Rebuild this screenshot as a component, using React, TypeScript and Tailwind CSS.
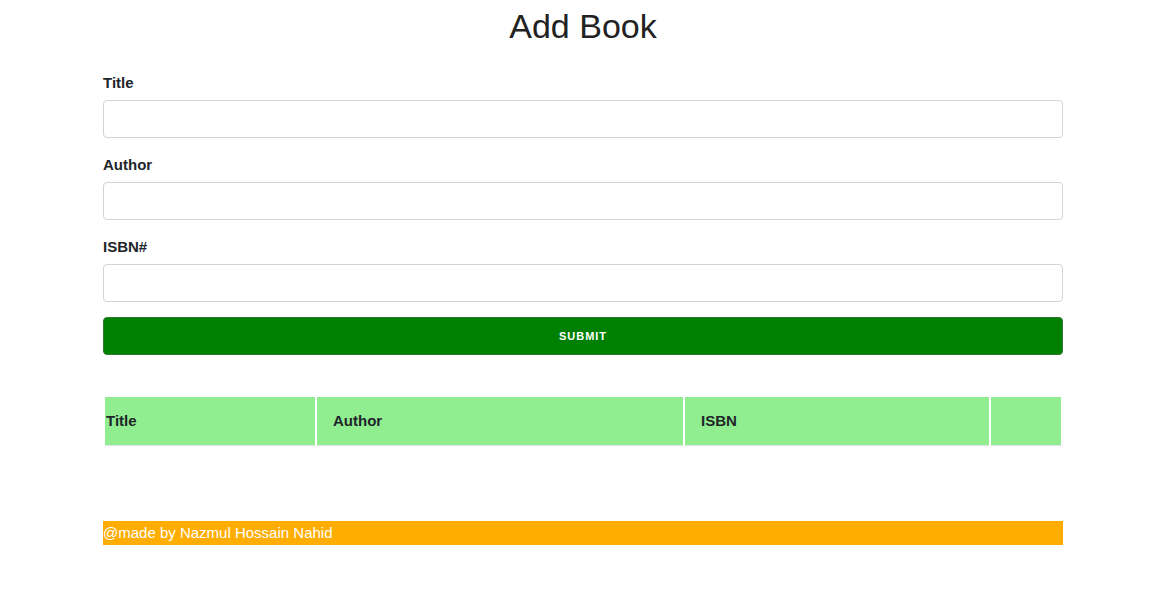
export default function App() {
  const fields = ["Title", "Author", "ISBN#"];
  return (
    <div className="min-h-screen bg-white font-['Liberation_Sans',Arial,sans-serif] text-[#212529]">
      <div className="ml-[103px] w-[960px]">
        {/* HEADER */}
        <h1 className="pt-[6px] text-center text-[34px] leading-[40px] text-[#222]">Add Book</h1>

        {/* FORM */}
        <form className="mt-[28px]">
          <div className="flex flex-col gap-[18px]">
            {fields.map((f) => (
              <div key={f}>
                <label className="block text-[15px] font-bold leading-[18px] mb-[8px]">{f}</label>
                <input
                  type="text"
                  className="block h-[38px] w-full rounded-[4px] border border-[#ced4da] bg-white px-3"
                />
              </div>
            ))}
          </div>
          <button
            type="button"
            className="mt-[15px] block h-[38px] w-full rounded-[4px] border border-[#2f7a2f] bg-[#008000] text-[11px] font-bold tracking-[1px] text-white"
          >
            SUBMIT
          </button>
        </form>

        {/* BOOK LIST */}
        <table className="mt-[40px] w-full border-separate border-spacing-[2px]">
          <thead>
            <tr className="text-left text-[15px] font-bold">
              <th className="h-[49px] w-[210px] border-b border-[#dee2e6] bg-[#90ee90] px-[1px]">Title</th>
              <th className="h-[49px] w-[366px] border-b border-[#dee2e6] bg-[#90ee90] px-4">Author</th>
              <th className="h-[49px] w-[304px] border-b border-[#dee2e6] bg-[#90ee90] px-4">ISBN</th>
              <th className="h-[49px] border-b border-[#dee2e6] bg-[#90ee90]"></th>
            </tr>
          </thead>
          <tbody></tbody>
        </table>

        {/* FOOTER */}
        <footer className="mt-[73px] h-[24px] bg-[#ffad00] text-[15px] leading-[24px] text-white">
          @made by Nazmul Hossain Nahid
        </footer>
      </div>
    </div>
  );
}
